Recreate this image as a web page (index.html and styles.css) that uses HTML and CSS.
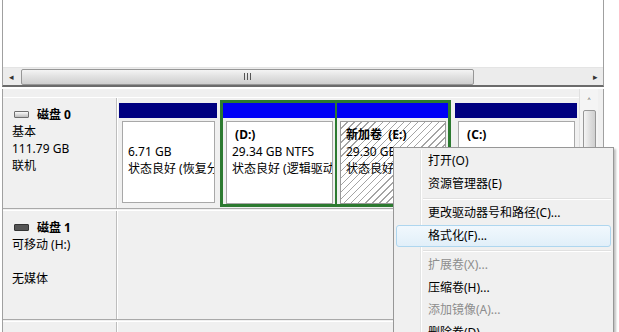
FILE: index.html
```html
<!DOCTYPE html>
<html lang="zh-CN">
<head>
    <meta charset="UTF-8">
    <title>磁盘管理</title>
    <link rel="stylesheet" href="styles.css">
</head>
<body>
    <div class="win">
        <div class="top">
            <div class="top-body"></div>
            <div class="hscroll">
                <span class="arr">&#9666;</span>
                <div class="hthumb"><span class="grip"></span></div>
                <div class="htrack"></div>
                <span class="arr">&#9656;</span>
            </div>
        </div>

        <div class="bottom">
            <div class="disks">
                <div class="disk">
                    <div class="label">
                        <div class="name"><span class="hdd"></span>磁盘 0</div>
                        <div>基本</div>
                        <div>111.79 GB</div>
                        <div>联机</div>
                    </div>
                    <div class="parts">
                        <div class="part w1">
                            <div class="bar navy"></div>
                            <div class="pbody">
                                <div class="vname">&nbsp;</div>
                                <div>6.71 GB</div>
                                <div>状态良好 (恢复分区)</div>
                            </div>
                        </div>
                        <div class="ext">
                            <div class="part w2">
                                <div class="bar blue"></div>
                                <div class="pbody">
                                    <div class="vname">&nbsp;(D:)</div>
                                    <div>29.34 GB NTFS</div>
                                    <div>状态良好 (逻辑驱动器)</div>
                                </div>
                            </div>
                            <div class="part w3">
                                <div class="bar blue"></div>
                                <div class="pbody hatch">
                                    <div class="vname">新加卷 &nbsp;(E:)</div>
                                    <div>29.30 GB NTFS</div>
                                    <div>状态良好 (逻辑驱动器)</div>
                                </div>
                            </div>
                        </div>
                        <div class="part w4">
                            <div class="bar navy"></div>
                            <div class="pbody">
                                <div class="vname">&nbsp;(C:)</div>
                                <div>46.44 GB NTFS</div>
                                <div>状态良好 (系统, 启动)</div>
                            </div>
                        </div>
                    </div>
                </div>

                <div class="disk d2">
                    <div class="label">
                        <div class="name"><span class="hdd dark"></span>磁盘 1</div>
                        <div>可移动 (H:)</div>
                        <div>&nbsp;</div>
                        <div>无媒体</div>
                    </div>
                    <div class="parts empty"></div>
                </div>

                <div class="disk d3">
                    <div class="label faint">
                        <div class="name"><span class="hdd"></span>CD-ROM 0</div>
                    </div>
                    <div class="parts empty"></div>
                </div>
            </div>

            <div class="vscroll">
                <span class="uarr">&#708;</span>
                <div class="vthumb"></div>
            </div>
        </div>

        <div class="menu">
            <div class="item">打开(O)</div>
            <div class="item">资源管理器(E)</div>
            <div class="sep"></div>
            <div class="item">更改驱动器号和路径(C)...</div>
            <div class="item hover">格式化(F)...</div>
            <div class="sep"></div>
            <div class="item off">扩展卷(X)...</div>
            <div class="item">压缩卷(H)...</div>
            <div class="item off">添加镜像(A)...</div>
            <div class="item">删除卷(D)...</div>
        </div>
    </div>
</body>
</html>
```

FILE: styles.css
```css
body {
    margin: 0;
    background: #fff;
    font-family: "Noto Sans", "Noto Sans CJK SC", sans-serif;
    font-size: 12px;
    color: #000;
    overflow: hidden;
    width: 619px;
    height: 332px;
}
.win { position: relative; width: 604px; height: 332px; }

.top { margin-left: 2px; width: 600px; border-left: 1px solid #a0a0a0; border-right: 1px solid #a0a0a0; border-bottom: 2px solid #6b6b6b; }
.top-body { height: 67px; background: #fff; }
.hscroll { height: 17px; background: #ececec; display: flex; align-items: center; border-top: 1px solid #e4e4e4; }
.hscroll .arr { width: 16px; text-align: center; font-size: 9px; color: #333; line-height: 17px; }
.hthumb { width: 451px; height: 14px; margin-left: 2px; border: 1px solid #979797; border-radius: 2px; background: linear-gradient(#f4f4f4, #e0e0e0 50%, #cfcfcf); display: flex; align-items: center; justify-content: center; }
.grip { width: 7px; height: 7px; background: repeating-linear-gradient(90deg, #555 0 1px, transparent 1px 3px); }
.htrack { flex: 1; height: 15px; }

.bottom { margin-left: 2px; width: 600px; height: 244px; margin-top: 2px; background: #f0f0f0; border-left: 1px solid #a0a0a0; border-right: 1px solid #a0a0a0; display: flex; }
.disks { width: 576px; padding-top: 8px; }
.disk { display: grid; grid-template-columns: 114px 460px; height: 110px; border-top: 1px solid #fff; border-bottom: 1px solid #a9a9a9; margin-bottom: 1px; }
.disk.d2 { height: 108px; }
.label { padding: 8px 0 0 9px; line-height: 17px; border-right: 1px solid #bdbdbd; background: #f0f0f0; }
.label .name { font-weight: bold; display: flex; align-items: center; }
.hdd { display: inline-block; width: 13px; height: 5px; margin: 0 8px 0 2px; border: 1px solid #6e6e6e; border-radius: 1px; background: linear-gradient(#fafafa, #bdbdbd); }
.hdd.dark { background: #555; border-color: #333; }
.label.faint { color: #c6c6c6; }
.label.faint .hdd { border-color: #ccc; background: #eee; }

.parts { display: flex; align-items: flex-start; padding: 2px 0 0 1px; border-left: 1px solid #fff; }
.part { display: flex; flex-direction: column; height: 102px; }
.bar { height: 15px; flex: none; }
.bar.navy { background: #000080; }
.bar.blue { background: #0000f6; }
.pbody { flex: 1; margin: 3px 2px 2px 3px; background: #fff; border: 1px solid #a8a8a8; padding: 4px 0 0 5px; line-height: 17px; white-space: nowrap; overflow: hidden; }
.pbody.hatch { background: #fff repeating-linear-gradient(135deg, #fff 0 4px, #a4a4a4 4px 5px); border-color: #9a9a9a; }
.vname { font-weight: bold; }
.w1 { width: 98px; margin-top: 3px; }
.ext { display: flex; gap: 2px; background: #2c7a30; border: 3px solid #2c7a30; margin-left: 3px; }
.ext .part { height: 101px; background: #f0f0f0; }
.w2 { width: 112px; }
.w3 { width: 111px; }
.w4 { width: 122px; margin-top: 3px; margin-left: 4px; }
.ext .part .pbody { margin-bottom: 0; }

.vscroll { width: 18px; background: #f4f4f4; border-left: 1px solid #e0e0e0; display: flex; flex-direction: column; align-items: center; padding-top: 7px; }
.uarr { font-size: 11px; line-height: 12px; color: #333; }
.vthumb { width: 11px; height: 160px; margin-top: 2px; border: 1px solid #979797; border-radius: 2px; background: linear-gradient(90deg, #f4f4f4, #dcdcdc 60%, #cfcfcf); }

.menu { position: absolute; left: 393px; top: 147px; width: 221px; height: 200px; background: #f0f0f0; border: 1px solid #979797; box-shadow: 2px 2px 2px rgba(0, 0, 0, 0.25); padding: 2px; box-sizing: border-box; }
.menu::before { content: ""; position: absolute; left: 26px; top: 2px; bottom: 0; width: 1px; background: #e2e3e3; border-right: 1px solid #fff; }
.item { position: relative; height: 20px; line-height: 20px; padding-left: 31px; border: 1px solid transparent; border-radius: 3px; margin-bottom: 0.5px; white-space: nowrap; }
.item.off { color: #8d8d8d; }
.item.hover { background: linear-gradient(#f1f8fd, #e1eff9); border-color: #aed6ef; }
.sep { height: 1px; margin: 3px 0 2.5px 27px; background: #e0e0e0; border-bottom: 1px solid #fff; }
```
